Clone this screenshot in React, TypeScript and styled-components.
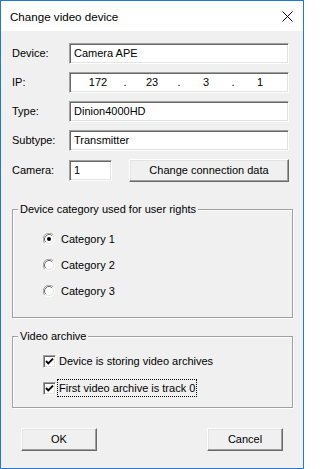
import React from "react";
import styled, { createGlobalStyle } from "styled-components";

const GlobalStyle = createGlobalStyle`
  html, body {
    margin: 0;
    padding: 0;
    background: #ffffff;
  }
  * { box-sizing: border-box; }
`;

const Window = styled.div`
  width: 304px;
  height: 469px;
  border: 1px solid #1f7bd4;
  background: #f0f0f0;
  display: flex;
  flex-direction: column;
  font-family: "Liberation Sans", Arial, sans-serif;
  font-size: 11px;
  color: #000;
`;

const TitleBar = styled.div`
  height: 30px;
  flex: none;
  background: #ffffff;
  display: flex;
  align-items: center;
  justify-content: space-between;
  padding: 0 10px 0 9px;
`;

const TitleText = styled.span`
  font-size: 11.6px;
  line-height: 14px;
  padding-top: 1px;
`;

const Body = styled.div`
  flex: 1;
  display: flex;
  flex-direction: column;
  padding: 12px 10px 0 11px;
`;

const Form = styled.div`
  display: grid;
  grid-template-columns: 57px 1fr;
  row-gap: 8px;
  align-items: center;
  padding-right: 4px;
`;

const FieldLabel = styled.label`
  line-height: 13px;
`;

const TextBox = styled.div<{ $width?: number }>`
  height: 21px;
  width: ${(p) => (p.$width ? `${p.$width}px` : "auto")};
  background: #ffffff;
  border: 1px solid;
  border-color: #a0a0a0 #ffffff #ffffff #a0a0a0;
  box-shadow: inset 1px 1px 0 #696969, inset -1px -1px 0 #e3e3e3;
  padding: 0 3px 0 4px;
  display: flex;
  align-items: center;
  line-height: 13px;
  white-space: nowrap;
`;

const IpBox = styled(TextBox)`
  padding: 0 1px;
  display: grid;
  grid-template-columns: 1fr 0 1fr 0 1fr 0 1fr;
`;

const IpPart = styled.span`
  text-align: center;
`;

const IpDot = styled.span`
  display: flex;
  justify-content: center;
  width: 0;
`;

const CameraRow = styled.div`
  display: flex;
  align-items: center;
  gap: 17px;
`;

const Button = styled.button<{ $width?: number }>`
  height: 23px;
  width: ${(p) => (p.$width ? `${p.$width}px` : "auto")};
  flex: ${(p) => (p.$width ? "none" : "1")};
  background: #f0f0f0;
  border: 1px solid;
  border-color: #ffffff #696969 #696969 #ffffff;
  box-shadow: inset -1px -1px 0 #a0a0a0, inset 1px 1px 0 #e3e3e3;
  font-family: inherit;
  font-size: 11px;
  color: #000;
  padding: 0;
  line-height: 13px;
`;

const GroupBox = styled.div<{ $top: number; $height: number; $padTop: number; $gap: number }>`
  position: relative;
  margin-top: ${(p) => p.$top}px;
  height: ${(p) => p.$height}px;
  border: 1px solid #a0a0a0;
  box-shadow: inset 1px 1px 0 #ffffff, 1px 1px 0 #ffffff;
  padding: ${(p) => p.$padTop}px 0 0 30px;
  display: flex;
  flex-direction: column;
  gap: ${(p) => p.$gap}px;
`;

const Legend = styled.span`
  position: absolute;
  top: -7px;
  left: 5px;
  padding: 0 2px;
  background: #f0f0f0;
  line-height: 13px;
`;

const OptionRow = styled.div<{ $gap: number }>`
  height: 18px;
  display: flex;
  align-items: center;
  gap: ${(p) => p.$gap}px;
`;

const OptionText = styled.span<{ $focused?: boolean }>`
  height: 18px;
  display: flex;
  align-items: center;
  padding: 0 1px;
  line-height: 13px;
  border: 1px dotted ${(p) => (p.$focused ? "#000" : "transparent")};
`;

const CheckBoxFrame = styled.span`
  width: 13px;
  height: 13px;
  flex: none;
  background: #fff;
  border: 1px solid;
  border-color: #a0a0a0 #ffffff #ffffff #a0a0a0;
  box-shadow: inset 1px 1px 0 #696969, inset -1px -1px 0 #e3e3e3;
  display: flex;
  align-items: center;
  justify-content: center;
`;

const ButtonRow = styled.div`
  display: flex;
  justify-content: space-between;
  margin-top: 20px;
  padding: 0 10px 0 9px;
`;

const CloseIcon = () => (
  <svg width="11" height="11" viewBox="0 0 11 11">
    <path d="M0.5 0.5 L10.5 10.5 M10.5 0.5 L0.5 10.5" stroke="#000" strokeWidth="1" fill="none" />
  </svg>
);

const Radio = ({ checked }: { checked?: boolean }) => (
  <svg width="12" height="12" viewBox="0 0 12 12" style={{ flex: "none" }}>
    <circle cx="6" cy="6" r="5" fill="#fff" />
    <path d="M1.76 10.24 A6 6 0 0 1 10.24 1.76" stroke="#a0a0a0" strokeWidth="1" fill="none" />
    <path d="M2.82 9.18 A4.5 4.5 0 0 1 9.18 2.82" stroke="#696969" strokeWidth="1" fill="none" />
    <path d="M10.24 1.76 A6 6 0 0 1 1.76 10.24" stroke="#ffffff" strokeWidth="1" fill="none" />
    <path d="M9.18 2.82 A4.5 4.5 0 0 1 2.82 9.18" stroke="#e3e3e3" strokeWidth="1" fill="none" />
    {checked && <circle cx="6" cy="6" r="2" fill="#000" />}
  </svg>
);

const Check = () => (
  <svg width="9" height="9" viewBox="0 0 9 9">
    <path d="M1 4 L3.3 6.4 L8 1.6" stroke="#000" strokeWidth="1.9" fill="none" />
  </svg>
);

export default function App() {
  return (
    <>
      <GlobalStyle />
      <Window>
        <TitleBar>
          <TitleText>Change video device</TitleText>
          <CloseIcon />
        </TitleBar>
        <Body>
          <Form>
            <FieldLabel>Device:</FieldLabel>
            <TextBox>Camera APE</TextBox>
            <FieldLabel>IP:</FieldLabel>
            <IpBox>
              <IpPart>172</IpPart>
              <IpDot>.</IpDot>
              <IpPart>23</IpPart>
              <IpDot>.</IpDot>
              <IpPart>3</IpPart>
              <IpDot>.</IpDot>
              <IpPart>1</IpPart>
            </IpBox>
            <FieldLabel>Type:</FieldLabel>
            <TextBox>Dinion4000HD</TextBox>
            <FieldLabel>Subtype:</FieldLabel>
            <TextBox>Transmitter</TextBox>
            <FieldLabel>Camera:</FieldLabel>
            <CameraRow>
              <TextBox $width={43}>1</TextBox>
              <Button>Change connection data</Button>
            </CameraRow>
          </Form>

          <GroupBox $top={27} $height={109} $padTop={20} $gap={8}>
            <Legend>Device category used for user rights</Legend>
            <OptionRow $gap={4}>
              <Radio checked />
              <OptionText>Category 1</OptionText>
            </OptionRow>
            <OptionRow $gap={4}>
              <Radio />
              <OptionText>Category 2</OptionText>
            </OptionRow>
            <OptionRow $gap={4}>
              <Radio />
              <OptionText>Category 3</OptionText>
            </OptionRow>
          </GroupBox>

          <GroupBox $top={18} $height={72} $padTop={15} $gap={9}>
            <Legend>Video archive</Legend>
            <OptionRow $gap={1}>
              <CheckBoxFrame><Check /></CheckBoxFrame>
              <OptionText>Device is storing video archives</OptionText>
            </OptionRow>
            <OptionRow $gap={1}>
              <CheckBoxFrame><Check /></CheckBoxFrame>
              <OptionText $focused>First video archive is track 0</OptionText>
            </OptionRow>
          </GroupBox>

          <ButtonRow>
            <Button $width={76}>OK</Button>
            <Button $width={76}>Cancel</Button>
          </ButtonRow>
        </Body>
      </Window>
    </>
  );
}
